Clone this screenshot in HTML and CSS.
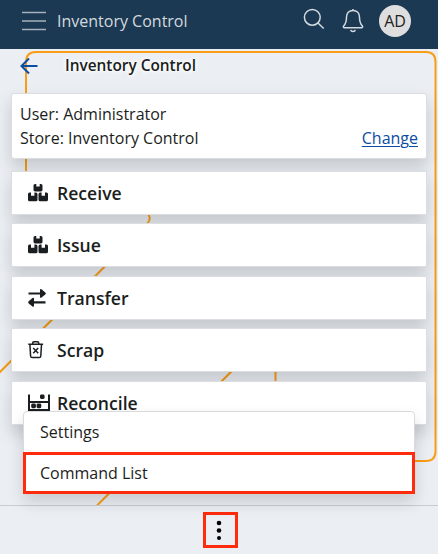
FILE: index.html
```html
<!DOCTYPE html>
<html lang="en">
<head>
<meta charset="utf-8">
<title>Inventory Control</title>
<link rel="stylesheet" href="styles.css">
</head>
<body>
<svg width="0" height="0" class="defs">
  <symbol id="boxes" viewBox="0 0 20 18">
    <path d="M7 0h1.300v2.600h3.400V0H13q1.500 0 1.500 1.500v4.300q0 1.600-1.600 1.600H7.100q-1.600 0-1.600-1.600V1.500Q5.500 0 7 0zM1.500 8.500H3v3.300h3.400V8.500h1.400q1.700 0 1.700 1.700v5.500q0 1.600-1.600 1.600H1.600Q0 17.300 0 15.700V10q0-1.500 1.500-1.500zM12.200 8.500h1.400v3.300H17V8.500h1.500Q20 8.500 20 10v5.700q0 1.600-1.600 1.600h-6.300q-1.600 0-1.600-1.600v-5.500q0-1.700 1.700-1.700z"/>
  </symbol>
</svg>
<header class="topbar">
  <svg class="burger" width="24" height="20" viewBox="0 0 24 20"><path d="M0 1.500h24M0 10h24M0 18.500h24"/></svg>
  <span class="brand">Inventory Control</span>
  <svg class="search" width="22" height="22" viewBox="0 0 22 22"><circle cx="9.300" cy="9.300" r="7.900"/><path d="M15 15l5.700 5.500"/></svg>
  <svg class="bell" width="22" height="25" viewBox="0 0 22 25"><path d="M11 1v1.500M11 2.500c-4 0-6.500 2.700-6.500 6.800 0 5.200-1 6.700-2.700 8.400-.8.900-.5 2 .7 2h17c1.200 0 1.500-1.100.7-2-1.700-1.700-2.700-3.200-2.700-8.400 0-4.100-2.500-6.800-6.500-6.800zM8.700 21.800c.5 2.200 4.100 2.200 4.600 0"/></svg>
  <span class="avatar">AD</span>
</header>
<main class="page">
  <svg class="backdrop" width="438" height="505" viewBox="0 0 438 505">
    <path d="M26 180V62Q26 52 36 52H426Q435.500 52 435.500 62V451Q435.500 461 426 461H400M147 213Q152.500 218 147 224L-2 374M97 505.500L260 343Q275.500 330 275.500 350V400"/>
  </svg>
  <div class="title">
    <svg width="18" height="18" viewBox="0 0 18 18"><path d="M17.500 9H2M9 1.500L1.500 9 9 16.500"/></svg>
    <h1>Inventory Control</h1>
  </div>
  <section class="card info">
    <div>User: Administrator</div>
    <div class="store"><span>Store: Inventory Control</span><a href="#">Change</a></div>
  </section>
  <nav class="actions">
    <div class="card action"><svg width="20" height="18"><use href="#boxes"/></svg><span>Receive</span></div>
    <div class="card action"><svg width="20" height="18"><use href="#boxes"/></svg><span>Issue</span></div>
    <div class="card action"><svg width="20" height="18" viewBox="0 0 20 18"><path d="M.5 3.400h11.500V.8q.2-1.300 1.500-.5l3.800 3.100q1 1.100 0 2.200l-3.800 3q-1.300.800-1.500-.5V5.600H.5zM17.500 12.200H6V9.600q-.2-1.300-1.500-.5L.7 12.200q-1 1.100 0 2.200l3.800 3q1.300.8 1.500-.5v-2.500h11.500z"/></svg><span>Transfer</span></div>
    <div class="card action"><svg class="line" width="20" height="18" viewBox="0 0 20 18"><path d="M.3 3.300h14.800M4.700 3V2q0-1.200 1.200-1.200h3.600q1.200 0 1.200 1.200v1M1.900 3.500l.7 11.500q.1 1.600 1.600 1.600h7q1.500 0 1.600-1.600l.7-11.500"/><path d="M5.200 7l5 5.200M10.200 7l-5 5.200"/></svg><span>Scrap</span></div>
    <div class="card action"><svg width="22" height="18" viewBox="0 0 22 18"><path d="M0 .5h2V7h18V.5h2V17H0zM2 9v6h18V9z" fill-rule="evenodd"/><rect x="12" y=".500" width="4.600" height="4.500" rx="1.400"/><rect x="3.200" y="9.600" width="4.700" height="4.600" rx="1.400"/><rect x="8.600" y="9.600" width="4.700" height="4.600" rx="1.400"/></svg><span>Reconcile</span></div>
  </nav>
</main>
<footer class="bottombar">
  <div class="menu">
    <div class="item">Settings</div>
    <div class="item marked">Command List</div>
  </div>
  <div class="more"><svg width="6" height="20" viewBox="0 0 6 20"><circle cx="3" cy="3" r="2.300"/><circle cx="3" cy="10.500" r="2.300"/><circle cx="3" cy="18" r="2"/></svg></div>
</footer>
</body>
</html>
```
FILE: styles.css
```css
* { box-sizing: border-box; }
body {
  margin: 0;
  height: 554px;
  display: flex;
  flex-direction: column;
  overflow: hidden;
  background: #ebeff4;
  color: #1b1e20;
  font: 16px/24px "Open Sans", sans-serif;
}
.defs { position: absolute; }
.topbar {
  flex: none;
  height: 49px;
  padding: 0 27px 7px 22px;
  display: flex;
  align-items: center;
  background: #1b3953;
  color: #d3d9de;
}
.topbar svg { flex: none; fill: none; stroke: #d3dae0; stroke-width: 1.5; }
.topbar .burger { stroke: #a6b1bb; }
.brand { margin-left: 11px; }
.search { margin: -4px 0 0 auto; }
.bell { margin: -1px 15.500px 0 16.500px; }
.avatar {
  width: 32px;
  height: 32px;
  border-radius: 50%;
  background: #dedede;
  color: #222;
  line-height: 32px;
  text-align: center;
}
.page { flex: none; height: 456px; padding: 0 11px; }
.backdrop { position: absolute; left: 0; top: 0; fill: none; stroke: #f99d16; stroke-width: 2; }
.title, .card { position: relative; }
.title { height: 44px; padding: 0 0 11px 9px; display: flex; align-items: center; }
.title svg { fill: none; stroke: #0b4da2; stroke-width: 2; }
.title h1 {
  margin: 0 0 0 27px;
  font-size: 15.400px;
  font-weight: 600;
  text-shadow: 0 0 4px #fff, 0 0 4px #fff, 0 0 6px #fff;
}
.card {
  background: #fff;
  border: 1px solid #dadde1;
  box-shadow: 0 8px 16px rgba(0, 0, 0, .17);
}
.info { height: 66px; padding: 8px; border-radius: 3px; }
.store { display: flex; justify-content: space-between; }
.store a { color: #0b4da2; text-underline-offset: 2px; text-decoration-thickness: 1px; }
.actions { margin-top: 12px; display: grid; gap: 8.400px; }
.action {
  height: 44px;
  padding-left: 16px;
  display: grid;
  grid-template-columns: 29px auto;
  align-items: center;
  font-size: 17.600px;
  font-weight: 600;
}
.action svg { fill: #1b1e20; }
.action .line { fill: none; stroke: #1b1e20; stroke-width: 1.5; }
.bottombar {
  position: relative;
  height: 49px;
  display: flex;
  align-items: center;
  justify-content: center;
  border-top: 1px solid #c9cdd1;
}
.menu {
  position: absolute;
  left: 23px;
  bottom: 60px;
  width: 392px;
  height: 83px;
  background: #fff;
  border: 1px solid #d8dbde;
  border-radius: 4px;
  box-shadow: 0 8px 16px rgba(0, 0, 0, .15);
}
.item { height: 40px; padding: 8px 16px; }
.marked { height: 42px; margin: 0 -1px; padding: 6px 14px; border: 3px solid #fe2b0c; }
.more {
  width: 35px;
  height: 36px;
  margin-left: 2px;
  padding-right: 2px;
  display: grid;
  place-items: center;
  border: 3px solid #fe2b0c;
}
```
